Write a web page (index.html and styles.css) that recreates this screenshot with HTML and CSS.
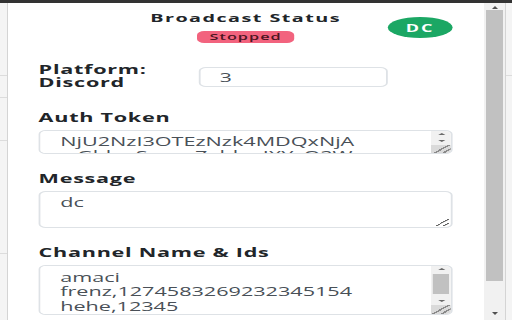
FILE: index.html
```html
<!DOCTYPE html>
<html lang="en">
<head>
<meta charset="utf-8">
<title>Broadcast Status</title>
<link rel="stylesheet" href="styles.css">
</head>
<body>
<div class="screen">
  <div class="edge edge-left"><i class="rule r1"></i><i class="rule r2"></i><i class="rule r3"></i><i class="rule r4"></i></div>
  <main class="popup">
    <div class="sheet">
      <header class="head">
        <div class="head-mid">
          <h1 class="title">Broadcast Status</h1>
          <span class="badge">Stopped</span>
        </div>
        <span class="avatar">DC</span>
      </header>
      <div class="field-row">
        <label class="label label-tight" for="platform"><span class="line">Platform:</span><span class="line">Discord</span></label>
        <input class="input" id="platform" value="3">
      </div>
      <div class="group group-first">
        <label class="label" for="token">Auth Token</label>
        <div class="box box-token">
          <textarea class="box-text" id="token">NjU2NzI3OTEzNzk4MDQxNjA
wGbhwS.qgwZebbwIXYzQ2W</textarea>
          <div class="sbar">
            <span class="sbtn"><i class="tri tri-up"></i></span>
            <span class="strack"></span>
            <span class="sbtn"><i class="tri tri-down"></i></span>
            <span class="grip"></span>
          </div>
        </div>
      </div>
      <div class="group">
        <label class="label" for="message">Message</label>
        <textarea class="area area-message" id="message">dc</textarea>
      </div>
      <div class="group">
        <label class="label" for="channels">Channel Name &amp; Ids</label>
        <div class="box box-channels">
          <textarea class="box-text" id="channels">amaci frenz,1274583269232345154
hehe,12345
lfc,1274583269232345154
test,1274583269232345154</textarea>
          <div class="sbar">
            <span class="sbtn"><i class="tri tri-up"></i></span>
            <span class="sthumb"></span>
            <span class="strack"></span>
            <span class="sbtn"><i class="tri tri-down"></i></span>
            <span class="grip"></span>
          </div>
        </div>
      </div>
    </div>
  </main>
  <div class="vscroll">
    <span class="arrow arrow-up"></span>
    <span class="thumb"></span>
    <span class="arrow arrow-down"></span>
  </div>
  <div class="edge edge-right"><i class="rule r1"></i></div>
</div>
</body>
</html>
```
FILE: styles.css
```css
* { box-sizing: border-box; }
html, body { margin: 0; padding: 0; }
body {
  width: 512px;
  height: 320px;
  overflow: hidden;
  background: #fff;
  font-family: "Open Sans", "Noto Sans", sans-serif;
}
.screen {
  display: flex;
  height: 320px;
  border-top: 3px solid #333;
}
.edge {
  flex: none;
  display: flex;
  flex-direction: column;
  background: #f4f4f4;
}
.edge-left { width: 8px; border-right: 1px solid #d4d4d4; }
.edge-right { width: 7px; border-left: 1px solid #d4d4d4; }
.rule { display: block; height: 1px; background: #dcdcdc; }
.edge-left .r1 { margin-top: 72px; }
.edge-left .r2 { margin-top: 21px; }
.edge-left .r3 { margin-top: 42px; }
.edge-left .r4 { margin-top: 112px; }
.edge-right .r1 { margin-top: 72px; }

.popup {
  flex: none;
  width: 476px;
  overflow: hidden;
  background: #fff;
}
.sheet {
  width: 264px;
  padding: 8px 17px 0;
  transform: scaleX(1.8);
  transform-origin: 0 0;
  color: #212529;
}

.head {
  display: grid;
  grid-template-columns: 1fr auto 1fr;
  align-items: start;
}
.head-mid {
  grid-column: 2;
  display: flex;
  flex-direction: column;
  align-items: center;
}
.title {
  margin: 0;
  font-size: 11px;
  line-height: 14px;
  font-weight: 700;
  letter-spacing: 0.8px;
  white-space: nowrap;
}
.badge {
  margin-top: 6px;
  height: 12px;
  padding: 0 6.5px;
  border-radius: 4px;
  background: #f2637e;
  color: #4b1522;
  font-size: 9px;
  line-height: 12px;
  font-weight: 600;
  letter-spacing: 0.6px;
}
.avatar {
  justify-self: end;
  margin-top: 6px;
  width: 36px;
  height: 21px;
  border-radius: 50%;
  background: #1ba764;
  color: #fff;
  font-size: 10px;
  font-weight: 700;
  letter-spacing: 1.2px;
  display: flex;
  align-items: center;
  justify-content: center;
}

.field-row {
  display: grid;
  grid-template-columns: 88.5px 105.5px;
  align-items: start;
  margin-top: 20px;
}
.label {
  display: block;
  font-size: 12px;
  line-height: 16px;
  font-weight: 700;
  letter-spacing: 0.4px;
  white-space: nowrap;
}
.label-tight { line-height: 13px; }
.line { display: block; }
.input {
  width: 105.5px;
  height: 20px;
  margin: 4px 0 0;
  border: 1px solid #dee2e6;
  border-radius: 4px;
  padding: 0 11px;
  font-family: "Open Sans", "Noto Sans", sans-serif;
  font-size: 12px;
  color: #495057;
  background: #fff;
}

.group { margin-top: 17px; }
.group-first { margin-top: 20.5px; }

.area,
.box-text {
  font-family: "Open Sans", "Noto Sans", sans-serif;
  font-size: 12px;
  line-height: 14px;
  color: #495057;
  background: #fff;
}
.area {
  display: block;
  width: 100%;
  height: 37px;
  margin: 4px 0 0;
  border: 1px solid #dee2e6;
  border-radius: 4px;
  padding: 4px 10px 4px 11px;
  resize: vertical;
}

.box {
  display: flex;
  margin-top: 4px;
  border: 1px solid #dee2e6;
  border-radius: 4px;
  overflow: hidden;
  background: #fff;
}
.box-token { height: 24px; }
.box-channels { height: 50px; }
.box-text {
  flex: 1;
  min-width: 0;
  height: 100%;
  margin: 0;
  border: 0;
  padding: 4px 8px 4px 11px;
  resize: none;
  outline: none;
  overflow: hidden;
}
.box-channels .box-text { padding-top: 5px; line-height: 14.5px; }

.sbar {
  flex: none;
  width: 11px;
  display: flex;
  flex-direction: column;
  background: #f1f1f1;
}
.sbtn {
  flex: none;
  height: 7px;
  display: flex;
  align-items: center;
  justify-content: center;
}
.tri {
  display: block;
  width: 0;
  height: 0;
  border-left: 2px solid transparent;
  border-right: 2px solid transparent;
}
.tri-up { border-bottom: 2px solid #6a6a6a; }
.tri-down { border-top: 2px solid #6a6a6a; }
.sthumb {
  flex: none;
  height: 20px;
  margin: 1px 1px 0;
  background: #c1c1c1;
}
.strack { flex: 1; }
.grip {
  flex: none;
  height: 9px;
  background-color: #dadada;
  background-image: linear-gradient(135deg, transparent 46%, #8a8a8a 46% 54%, transparent 54% 70%, #8a8a8a 70% 78%, transparent 78%);
}

.vscroll {
  flex: none;
  width: 21px;
  display: flex;
  flex-direction: column;
  align-items: center;
  background: #f1f1f1;
}
.arrow {
  flex: none;
  width: 0;
  height: 0;
  border-left: 3.5px solid transparent;
  border-right: 3.5px solid transparent;
}
.arrow-up {
  margin-top: 3px;
  border-bottom: 3px solid #505050;
}
.thumb {
  flex: none;
  width: 17px;
  height: 271px;
  margin-top: 1px;
  background: #c1c1c1;
}
.arrow-down {
  margin-top: auto;
  margin-bottom: 5px;
  border-top: 3px solid #505050;
}
```
